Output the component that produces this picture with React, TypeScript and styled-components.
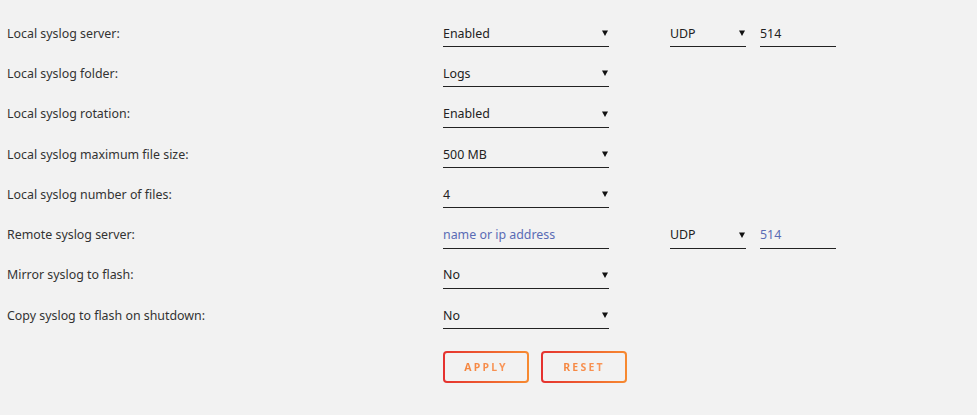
import styled, { createGlobalStyle } from "styled-components";

const GlobalStyle = createGlobalStyle`
  html, body {
    margin: 0;
    padding: 0;
    background: #f2f2f2;
  }
  body {
    font-family: "Noto Sans", "Open Sans", sans-serif;
    font-size: 12.4px;
    color: #333;
  }
`;

const Page = styled.div`
  width: 977px;
  height: 415px;
  padding: 13px 0 0 7px;
  box-sizing: border-box;
  background: #f2f2f2;
`;

const Row = styled.div`
  display: grid;
  grid-template-columns: 436px 166px 61px 76px 14px 76px;
  align-items: center;
  height: 40.3px;
`;

const Label = styled.div`
  color: #333;
`;

const Select = styled.div<{ $col?: number }>`
  grid-column: ${(p) => p.$col ?? 2};
  display: flex;
  align-items: center;
  justify-content: space-between;
  height: 28px;
  padding-top: 1px;
  box-sizing: border-box;
  border-bottom: 1px solid #222;
  color: #222;
  cursor: pointer;
`;

const Arrow = styled.svg`
  width: 6px;
  height: 6px;
  margin-right: 1px;
`;

const Input = styled.input<{ $col?: number }>`
  grid-column: ${(p) => p.$col ?? 2};
  height: 28px;
  box-sizing: border-box;
  border: none;
  border-bottom: 1px solid #222;
  background: transparent;
  padding: 1px 0 0;
  font-family: inherit;
  font-size: inherit;
  color: #222;
  outline: none;
  &::placeholder {
    color: #5a6cb5;
    opacity: 1;
  }
`;

const Actions = styled.div`
  display: flex;
  gap: 12px;
  margin: 16px 0 0 436px;
`;

const Button = styled.button`
  width: 86px;
  height: 32px;
  box-sizing: border-box;
  border: 2px solid transparent;
  border-radius: 4px;
  background: linear-gradient(#f2f2f2, #f2f2f2) padding-box,
    linear-gradient(90deg, #e5312f, #f78a30) border-box;
  font-family: inherit;
  font-size: 10.5px;
  font-weight: 700;
  letter-spacing: 2.2px;
  cursor: pointer;
  span {
    background: linear-gradient(90deg, #f5843c, #f9965a);
    -webkit-background-clip: text;
    background-clip: text;
    color: transparent;
  }
`;

function Caret() {
  return (
    <Arrow viewBox="0 0 6 6">
      <path d="M0 0.5h6L3 6z" fill="#111" />
    </Arrow>
  );
}

function Dropdown({ value, col }: { value: string; col?: number }) {
  return (
    <Select $col={col}>
      <span>{value}</span>
      <Caret />
    </Select>
  );
}

const rows: { label: string; value?: string; remote?: boolean; proto?: boolean }[] = [
  { label: "Local syslog server:", value: "Enabled", proto: true },
  { label: "Local syslog folder:", value: "Logs" },
  { label: "Local syslog rotation:", value: "Enabled" },
  { label: "Local syslog maximum file size:", value: "500 MB" },
  { label: "Local syslog number of files:", value: "4" },
  { label: "Remote syslog server:", remote: true, proto: true },
  { label: "Mirror syslog to flash:", value: "No" },
  { label: "Copy syslog to flash on shutdown:", value: "No" },
];

export default function App() {
  return (
    <>
      <GlobalStyle />
      <Page>
        {rows.map((r) => (
          <Row key={r.label}>
            <Label>{r.label}</Label>
            {r.remote ? (
              <Input placeholder="name or ip address" />
            ) : (
              <Dropdown value={r.value ?? ""} />
            )}
            {r.proto && (
              <>
                <Dropdown value="UDP" col={4} />
                {r.remote ? (
                  <Input $col={6} placeholder="514" />
                ) : (
                  <Input $col={6} defaultValue="514" />
                )}
              </>
            )}
          </Row>
        ))}
        <Actions>
          <Button>
            <span>APPLY</span>
          </Button>
          <Button>
            <span>RESET</span>
          </Button>
        </Actions>
      </Page>
    </>
  );
}
